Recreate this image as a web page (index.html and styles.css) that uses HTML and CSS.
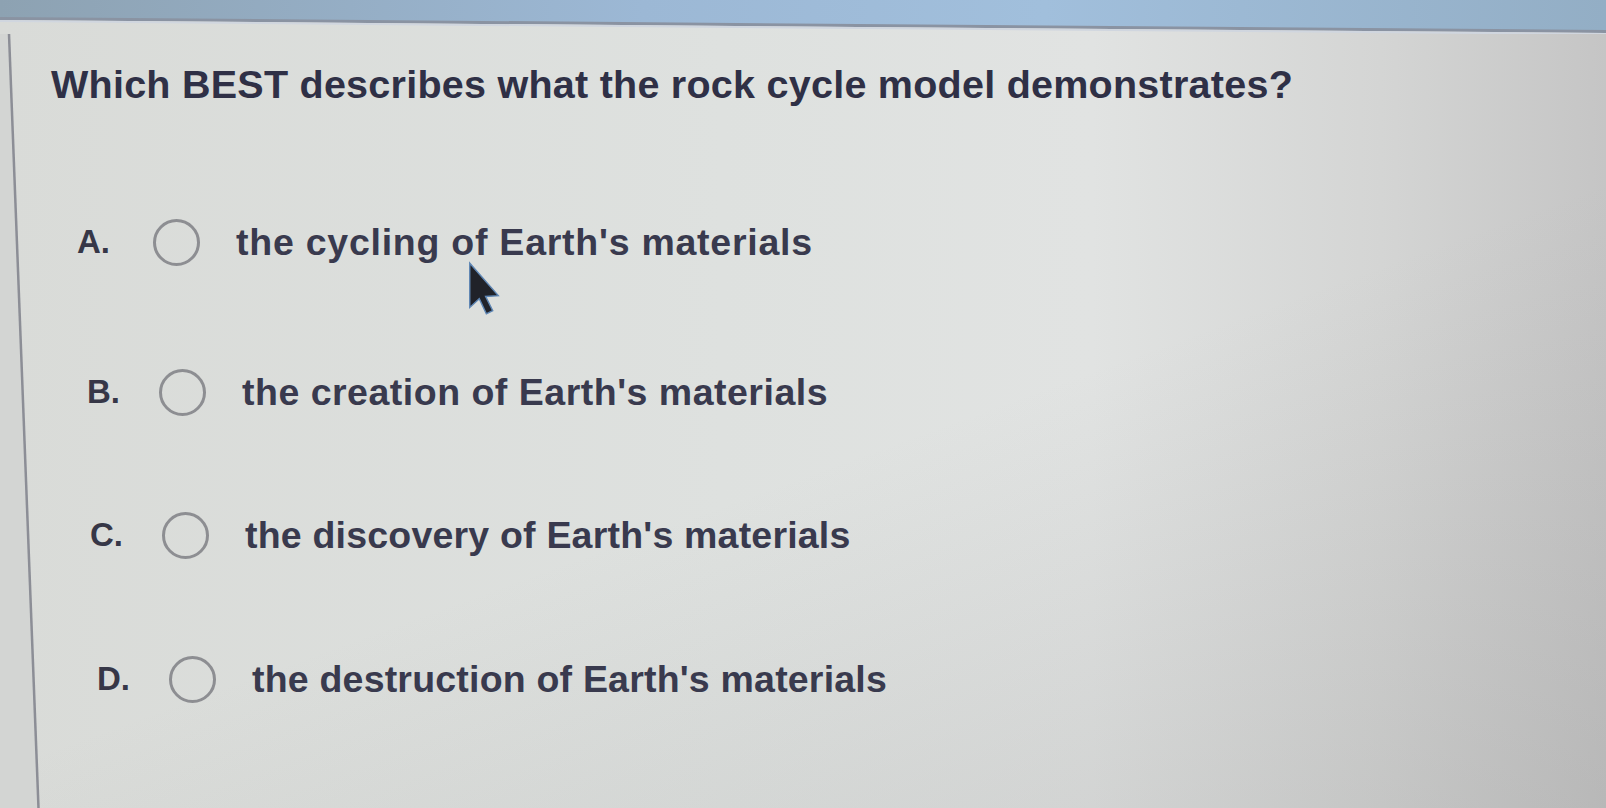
FILE: index.html
```html
<!DOCTYPE html>
<html>
<head>
<meta charset="utf-8">
<title>Question</title>
<link rel="stylesheet" href="styles.css">
</head>
<body>
<div class="screen">
  <div class="topbar">
    <svg class="topbar-svg" viewBox="0 0 1606 34" preserveAspectRatio="none" width="1606" height="34">
      <defs>
        <linearGradient id="tb" x1="0" y1="0" x2="1" y2="0">
          <stop offset="0" stop-color="#8da2b2"/>
          <stop offset="0.4" stop-color="#9cb8d5"/>
          <stop offset="0.65" stop-color="#a1bfdc"/>
          <stop offset="1" stop-color="#93aec5"/>
        </linearGradient>
      </defs>
      <polygon points="0,0 1606,0 1606,31 0,18" fill="url(#tb)"/>
      <line x1="0" y1="18.5" x2="1606" y2="31.5" stroke="#8a93a2" stroke-width="3"/>
      <line x1="0" y1="21" x2="1606" y2="34" stroke="#d0d6df" stroke-width="2"/>
    </svg>
  </div>
  <div class="main">
    <div class="edge">
      <svg class="edge-svg" viewBox="0 0 40 774" preserveAspectRatio="none" width="40" height="774">
        <polygon points="0,0 9,0 38,774 0,774" fill="#d3d5d3"/>
        <line x1="9" y1="0" x2="38.5" y2="774" stroke="#8c8e96" stroke-width="2.5"/>
      </svg>
    </div>
    <div class="content">
      <h1 class="question">Which BEST describes what the rock cycle model demonstrates?</h1>
      <ul class="options">
        <li class="option">
          <span class="letter">A.</span>
          <span class="radio"></span>
          <span class="label">the cycling of Earth's materials</span>
        </li>
        <li class="option">
          <span class="letter">B.</span>
          <span class="radio"></span>
          <span class="label">the creation of Earth's materials</span>
        </li>
        <li class="option">
          <span class="letter">C.</span>
          <span class="radio"></span>
          <span class="label">the discovery of Earth's materials</span>
        </li>
        <li class="option">
          <span class="letter">D.</span>
          <span class="radio"></span>
          <span class="label">the destruction of Earth's materials</span>
        </li>
      </ul>
    </div>
  </div>
  <svg class="cursor" viewBox="0 0 24 36" width="38" height="57">
    <path d="M3 2 L3 30 L9 24.5 L13.5 34 L17.5 32 L13 23 L21 22.5 Z" fill="#202229" stroke="#5e86b4" stroke-width="0.9"/>
  </svg>
</div>
</body>
</html>
```

FILE: styles.css
```css
html, body {
  margin: 0;
  padding: 0;
  width: 1606px;
  height: 808px;
  overflow: hidden;
}

body {
  font-family: "Liberation Sans", Arial, sans-serif;
  background: #dcdfdc;
}

.screen {
  position: relative;
  width: 1606px;
  height: 808px;
  display: flex;
  flex-direction: column;
  background:
    linear-gradient(160deg, rgba(255,255,255,0) 55%, rgba(150,150,150,0.28) 100%),
    linear-gradient(to right, #d9dbd8 0%, #dee1df 45%, #e1e3e2 68%, #d4d5d4 86%, #c5c5c5 100%);
}

.topbar {
  height: 34px;
  flex: none;
}

.topbar-svg {
  display: block;
}

.main {
  flex: 1;
  display: flex;
}

.edge {
  flex: none;
  width: 40px;
}

.edge-svg {
  display: block;
}

.content {
  flex: 1;
}

.question {
  margin: 28px 0 0 11px;
  font-size: 39.5px;
  font-weight: 700;
  color: #2f3046;
  letter-spacing: 0.25px;
  line-height: 44px;
}

.options {
  list-style: none;
  margin: 61px 0 0 0;
  padding: 0;
}

.option {
  display: flex;
  align-items: center;
  color: #393a4e;
}

.option:nth-child(1) { padding-left: 37px; height: 150px; }
.option:nth-child(2) { padding-left: 47px; height: 150px; }
.option:nth-child(3) { padding-left: 50px; height: 136px; }
.option:nth-child(4) { padding-left: 57px; height: 152px; }

.letter {
  flex: none;
  width: 72px;
  font-size: 33px;
  font-weight: 700;
  color: #363747;
}

.option:nth-child(1) .letter { width: 76px; }

.radio {
  flex: none;
  width: 47px;
  height: 47px;
  border: 3px solid #8d8e92;
  border-radius: 50%;
  box-sizing: border-box;
}

.label {
  margin-left: 36px;
  font-size: 37.5px;
  font-weight: 700;
  letter-spacing: 0.2px;
}

.option:nth-child(1) .label { letter-spacing: 0.75px; }
.option:nth-child(2) .label { letter-spacing: 0.5px; }

.cursor {
  position: absolute;
  left: 465px;
  top: 260px;
}
```
